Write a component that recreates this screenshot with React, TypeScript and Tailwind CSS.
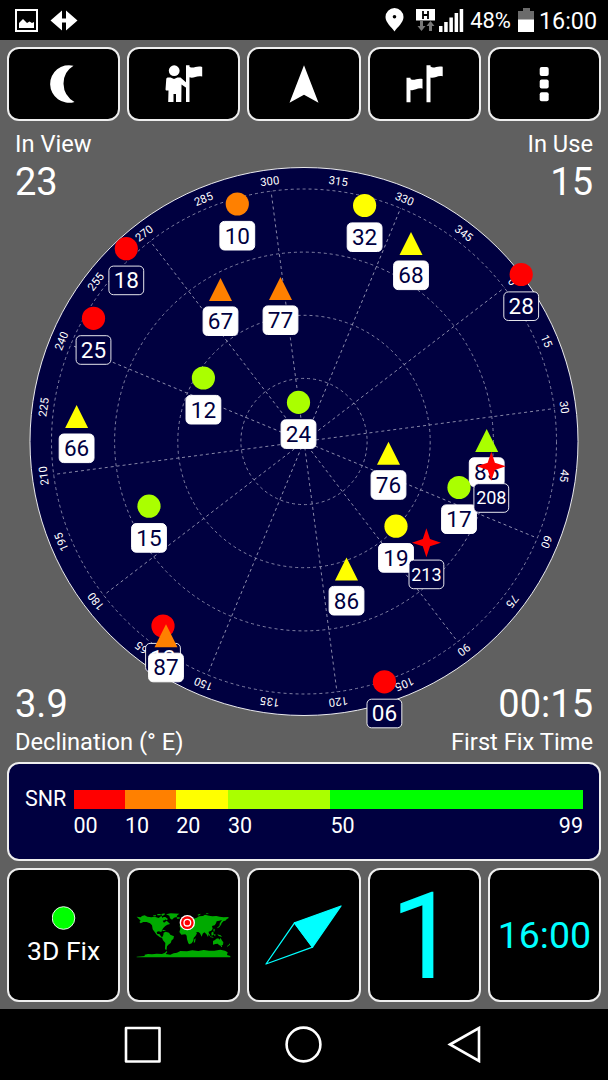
import React from 'react';

type Shape = 'circle' | 'triangle' | 'star';

interface Satellite {
  id: string;
  shape: Shape;
  color: string;
  x: number;
  y: number;
  inUse: boolean;
}

const RED = '#ff0000';
const ORANGE = '#ff8000';
const YELLOW = '#ffff00';
const LIME = '#aaff00';
const NAVY = '#000040';

const CENTER_X = 304;
const CENTER_Y = 313.5;
const HEADING = 52.5;

const satellites: Satellite[] = [
  { id: '10', shape: 'circle', color: ORANGE, x: 237.3, y: 76, inUse: true },
  { id: '18', shape: 'circle', color: RED, x: 126.3, y: 120.7, inUse: false },
  { id: '25', shape: 'circle', color: RED, x: 93.5, y: 190.3, inUse: false },
  { id: '67', shape: 'triangle', color: ORANGE, x: 220.5, y: 161.5, inUse: true },
  { id: '77', shape: 'triangle', color: ORANGE, x: 280.5, y: 160.5, inUse: true },
  { id: '12', shape: 'circle', color: LIME, x: 203.4, y: 250, inUse: true },
  { id: '24', shape: 'circle', color: LIME, x: 298.5, y: 274.4, inUse: true },
  { id: '66', shape: 'triangle', color: YELLOW, x: 76.6, y: 288.6, inUse: true },
  { id: '32', shape: 'circle', color: YELLOW, x: 364.6, y: 77.5, inUse: true },
  { id: '68', shape: 'triangle', color: YELLOW, x: 411, y: 115.6, inUse: true },
  { id: '28', shape: 'circle', color: RED, x: 521.2, y: 146.5, inUse: false },
  { id: '15', shape: 'circle', color: LIME, x: 149, y: 378.2, inUse: true },
  { id: '13', shape: 'circle', color: RED, x: 163, y: 498, inUse: false },
  { id: '87', shape: 'triangle', color: ORANGE, x: 166, y: 507.8, inUse: true },
  { id: '76', shape: 'triangle', color: YELLOW, x: 388.5, y: 325.3, inUse: true },
  { id: '85', shape: 'triangle', color: LIME, x: 486.7, y: 312.4, inUse: true },
  { id: '17', shape: 'circle', color: LIME, x: 459, y: 359.5, inUse: true },
  { id: '208', shape: 'star', color: RED, x: 491.3, y: 338.3, inUse: false },
  { id: '19', shape: 'circle', color: YELLOW, x: 396, y: 398.2, inUse: true },
  { id: '213', shape: 'star', color: RED, x: 426.4, y: 414.7, inUse: false },
  { id: '86', shape: 'triangle', color: YELLOW, x: 346.5, y: 441, inUse: true },
  { id: '06', shape: 'circle', color: RED, x: 384.4, y: 553.8, inUse: false },
];

const rings = [63.1, 126.2, 189.4, 252.5];
const bearings = Array.from({ length: 24 }, (_, i) => i * 15);

const Marker: React.FC<{ sat: Satellite }> = ({ sat }) => (
  <g transform={`translate(${sat.x} ${sat.y})`}>
    {sat.shape === 'circle' && <circle r={11.6} fill={sat.color} />}
    {sat.shape === 'triangle' && <path d="M0 -11.5 11.5 11.5H-11.5Z" fill={sat.color} />}
    {sat.shape === 'star' && (
      <path d="M0 -14.5 3.6 -3.6 14.5 0 3.6 3.6 0 14.5 -3.6 3.6 -14.5 0 -3.6 -3.6Z" fill={sat.color} />
    )}
    <rect
      x={-17.4}
      y={17.4}
      width={34.8}
      height={28.6}
      rx={4.5}
      fill={sat.inUse ? '#fff' : NAVY}
      stroke="#fff"
      strokeWidth={sat.inUse ? 1 : 0.9}
    />
    <text
      y={sat.id.length > 2 ? 38.2 : 39.6}
      textAnchor="middle"
      fill={sat.inUse ? NAVY : '#fff'}
      className={sat.id.length > 2 ? 'text-[18px]' : 'text-[22.5px]'}
    >
      {sat.id}
    </text>
  </g>
);

const SkyPlot: React.FC = () => (
  <svg width="608" height="627" viewBox="0 0 608 627" className="col-start-1 row-start-1">
    <circle cx={CENTER_X} cy={CENTER_Y} r={274} fill={NAVY} stroke="#fff" strokeWidth={0.9} />
    <g fill="none" stroke="#a0a0ba" strokeWidth={0.8} strokeDasharray="3 3">
      {rings.map(r => (
        <circle key={r} cx={CENTER_X} cy={CENTER_Y} r={r} />
      ))}
      {bearings.filter(b => b % 30 === 0).map(b => (
        <path key={b} d={`M${CENTER_X} ${CENTER_Y}V${CENTER_Y - 252.5}`} transform={`rotate(${b + HEADING} ${CENTER_X} ${CENTER_Y})`} />
      ))}
    </g>
    {bearings.map(b => (
      <text
        key={b}
        x={CENTER_X}
        y={CENTER_Y - 258.6}
        textAnchor="middle"
        fill="#fff"
        transform={`rotate(${b + HEADING} ${CENTER_X} ${CENTER_Y})`}
        className="text-[11.3px]"
      >
        {b}
      </text>
    ))}
    {satellites.map(sat => (
      <Marker key={sat.id} sat={sat} />
    ))}
  </svg>
);

const Tile: React.FC<{ className?: string; children: React.ReactNode }> = ({ className = '', children }) => (
  <div className={`flex flex-1 min-w-0 flex-col items-center justify-center rounded-[12px] border-2 border-[#eee] bg-black ${className}`}>
    {children}
  </div>
);

const StatusBar: React.FC = () => (
  <header className="flex h-[40px] items-center justify-between bg-black pl-[15px] pr-[11px]">
    <div className="flex items-center gap-[12px]">
      <svg width="23" height="23" viewBox="0 0 23 23">
        <path d="M1 1h21v21H1z" fill="none" stroke="#fff" strokeWidth="2" />
        <path d="M4 19v-5l4-4 4 4 2.500-1.500L17 14l2-1v6z" fill="#fff" />
      </svg>
      <svg width="28" height="23" viewBox="0 0 28 23" fill="#fff">
        <path d="M12 1.500v8h4v-8L27.500 11.500 16 21.500v-8h-4v8L.5 11.500z" />
      </svg>
    </div>
    <div className="flex items-center text-white">
      <svg width="19" height="24" viewBox="0 0 19 24">
        <path d="M9.500 0a9 9 0 0 1 9 9c0 5.500-6 10-9 14.500C6.500 19 .5 14.500.5 9a9 9 0 0 1 9-9z" fill="#fff" />
        <circle cx="9.500" cy="8.700" r="1.800" fill="#000" />
      </svg>
      <svg width="19" height="24" viewBox="0 0 19 24" className="ml-[12px]">
        <path d="M0 1h19v11.500H0z" fill="#fff" />
        <path d="M7 3v8M12 3v8M7 7h5" stroke="#000" strokeWidth="1.800" />
        <path d="M4 13h3v5h2.500l-4 5-4-5H4zM13 23h3v-5h2.500l-4-5-4 5H13z" fill="#777" />
      </svg>
      <svg width="25" height="24" viewBox="0 0 25 24" fill="#fff" className="ml-[4px]">
        <path d="M0 18h3.500v6H0zM5.200 14h3.500v10H5.200zM10.400 9.500h3.500V24h-3.500zM15.600 5h3.500v19h-3.500zM20.700 1h3.500v23h-3.500z" />
      </svg>
      <span className="ml-[6px] mt-[2px] text-[22px] leading-[26px]">48%</span>
      <svg width="16" height="24" viewBox="0 0 16 24" className="ml-[7px]">
        <path d="M5 0h7v3h4v9H0V3h5z" fill="#6b6b6b" />
        <path d="M0 11.500h16V24H0z" fill="#fff" />
      </svg>
      <span className="ml-[5px] mt-[2px] text-[23.3px] leading-[26px]">16:00</span>
    </div>
  </header>
);

const Toolbar: React.FC = () => (
  <nav className="flex h-[74px] gap-[7px]">
    <Tile>
      <svg width="40" height="40" viewBox="0 0 40 40" fill="#fff">
        <path d="M29.500 1.700A18.800 18.800 0 1 0 30.500 37.900A20.900 20.900 0 0 1 29.500 1.700z" />
      </svg>
    </Tile>
    <Tile>
      <svg width="40" height="40" viewBox="0 0 40 40" fill="#fff">
        <circle cx="10.200" cy="6.700" r="5.400" />
        <path d="M3.500 13.500h3l3.500 1.500 3.500-1.500h3l6 5.300v5.200l-5-3.500-.2 17.500h-5.300V30h-2.500v8H4.200l.3-11.500H2l-.5-1 .8-11z" />
        <path d="M22 1.200h3.500v1.500c4 2.500 6.500-1.500 12.700.2v9.600c-6-1.500-8.500 2.500-12.700.8v24.800H22z" />
      </svg>
    </Tile>
    <Tile>
      <svg width="40" height="40" viewBox="0 0 40 40" fill="#fff">
        <path d="M20 1.200l14.500 37.500L20 30.700 5.500 38.700z" />
      </svg>
    </Tile>
    <Tile>
      <svg width="40" height="40" viewBox="0 0 40 40" fill="#fff">
        <path d="M2.500 13.700h4v1.200c3.500 2.500 6-1.200 12 0v9.800c-5-1.500-8 2.500-12 1.200v12.300h-4z" />
        <path d="M22.500 1.200h4v1.300c3.500 2.700 6-1.200 12.200.2v9.600c-5-1.500-8 2.500-12.200 1.200v24.700h-4z" />
      </svg>
    </Tile>
    <Tile>
      <svg width="40" height="40" viewBox="0 0 40 40" fill="#fff">
        <rect x="15.700" y="3" width="9" height="9" rx="2" />
        <rect x="15.700" y="15.500" width="9" height="9" rx="2" />
        <rect x="15.700" y="28.200" width="9" height="9" rx="2" />
      </svg>
    </Tile>
  </nav>
);

const Readout: React.FC<{ label: string; value: string; flip?: boolean; right?: boolean }> = ({ label, value, flip, right }) => (
  <div className={`flex ${flip ? 'flex-col-reverse' : 'flex-col'} ${right ? 'items-end' : 'items-start'}`}>
    <span className="text-[23.7px] leading-[32px]">{label}</span>
    <span className="text-[38px] leading-[44px]">{value}</span>
  </div>
);

const snrBands = [
  { label: '00', width: 51.5, color: RED },
  { label: '10', width: 51.2, color: ORANGE },
  { label: '20', width: 51.8, color: YELLOW },
  { label: '30', width: 102.5, color: LIME },
  { label: '50', width: 252.5, color: '#00ff00' },
];

const SnrLegend: React.FC = () => (
  <section className="flex h-[99px] rounded-[12px] border-2 border-[#eee] bg-[#000040] pl-[16px] pt-[26px] text-[21.5px] text-white">
    <span className="w-[48.500px] leading-[17px]">SNR</span>
    <div className="flex">
      {snrBands.map(band => (
        <div key={band.label} style={{ width: band.width }}>
          <div className="h-[19px]" style={{ backgroundColor: band.color }} />
          <div className="mt-[4px] flex justify-between leading-[26px]">
            <span>{band.label}</span>
            {band.label === '50' && <span>99</span>}
          </div>
        </div>
      ))}
    </div>
  </section>
);

const WorldMap: React.FC = () => (
  <svg width="110" height="70" viewBox="0 0 330 210" className="ml-[2px]">
    <g fill="#00aa00">
      {/* north america */}
      <path d="M20 50l12 2 4-4 8-2 8 4 12 2 10-2 12 4 8-6 4 6 6-2 2 8-8 2 4 6 8-6 4 4 6 6-8 2-6 4-6 6-4 6-2 6-8-2-6 2 2 6 6 0 6 8 6 2-2 2-8-2-10-8-6-8-6-8-2-12-6-6-10-4-10 0-8 4-4-4 4-4z" />
      <path d="M70 46h8v3h-8zM82 42h10v4H82zM94 42l10-2v4l-8 4zM98 51h8l8 6-4 4-6-4z" />
      {/* greenland */}
      <path d="M108 43l14-3 26 1-6 5-2 5-8 2-6 6-6-4-2-8z" />
      <path d="M140 52h9v4h-8zM94 89l8 1 6 3-8 0z" />
      {/* south america */}
      <path d="M101 98l6-3 10 3 4 6 11 5-2 8-5 4-3 8-7 5-4 5-1 8-1 4-4-4 1-18-7-8-3-8 4-8z" />
      {/* africa */}
      <path d="M151 87l8-4 12 0 4 4 14 0 4 10 7 3-3 7-6 7-1 8-5 8-7 3-3-3-4-12-1-11-4-4-12 1-6-8z" />
      <path d="M193 118l4-3-2 12-4 1z" />
      {/* eurasia */}
      <path d="M149 80l1-7 7-1 0-6 8-3 4-7 8-6 8 2 4 4 10-2 8-5 12-1 6-4 12 3 10 2 12-1 10 2 12 2 14-1 1 3-6 4-4 4-5 1-8 8-2-4 5-7-8 2-8 2-2 6-4 6-8 2 2 8-4 6-8 3 0 8-2 8-5-9-6-5-5 4-3 9-5-10-5-4-6 1 1 5-7 6-5-1-6-11-1-6-8 1-4-3-8 0-8 2z" />
      <path d="M159 56l5 2-1 8-6 0zM203 44l8-3v3l-7 3zM228 39l9 2-7 2zM270 67l5 4-6 9-6 5-1-3 6-4z" />
      {/* indonesia and australia */}
      <path d="M235 98l6 8-2 2-6-8zM244 98l6-4 1 10-6 3zM251 86l3 1 0 8-4-3zM240 109l10 2v2l-10-2zM253 102l3 0 0 7-3-1zM262 103l10 3 4 5-10-3z" />
      <path d="M249 123l6-3 4-4 6-1 3 4 4-5 3 6 5 7-1 7-6 4-6-3-4-4-7 1-7 2zM273 138h3v3h-3zM298 130l2 4-8 6-1-2 5-3z" />
      {/* antarctica */}
      <path d="M20 170l24-2 0-4 10-2 12 1 14-2 16 1 8-3 6-6 2 3-5 6 14 2 10-4 10-2 10-5 20 1 16-3 18 2 16-3 16 2 16 0 18-3 14 3 8 5-2 8 10 3v4H20z" />
    </g>
    <circle cx="172" cy="68" r="23" fill="#fff" />
    <circle cx="172" cy="68" r="19" fill="#ff0000" />
    <circle cx="172" cy="68" r="10" fill="none" stroke="#fff" strokeWidth="4" />
  </svg>
);

const BottomTiles: React.FC = () => (
  <section className="flex h-[134px] gap-[7px] text-white">
    <Tile>
      <svg width="24" height="24" viewBox="0 0 24 24" className="mt-[3px]">
        <circle cx="11.500" cy="12" r="11.300" fill="#00ff00" stroke="#fff" strokeWidth="0.900" />
      </svg>
      <span className="mt-[5px] text-[26.5px] leading-[32px]">3D Fix</span>
    </Tile>
    <Tile>
      <WorldMap />
    </Tile>
    <Tile>
      <svg width="80" height="64" viewBox="0 0 80 64" stroke="#00ffff" strokeWidth="1.300" strokeLinejoin="round">
        <path d="M30.500 19.800L77 3 48.500 44.200z" fill="#00ffff" />
        <path d="M30.500 19.800L2 61 48.500 44.200z" fill="none" />
      </svg>
    </Tile>
    <Tile>
      <span className="pt-[5px] text-[121px] leading-[125px] text-[#00ffff]">1</span>
    </Tile>
    <Tile>
      <span className="text-[37.5px] leading-[44px] text-[#00ffff]">16:00</span>
    </Tile>
  </section>
);

const NavigationBar: React.FC = () => (
  <footer className="flex h-[71px] items-center justify-center gap-[124px] bg-black pr-[1px]">
    <svg width="37" height="37" viewBox="0 0 37 37" fill="none" stroke="#fff" strokeWidth="2.600" strokeLinejoin="round">
      <path d="M2 2h33.500v33.500H2z" />
    </svg>
    <svg width="37" height="37" viewBox="0 0 37 37" fill="none" stroke="#fff" strokeWidth="2.600">
      <circle cx="18.500" cy="18.500" r="16.900" />
    </svg>
    <svg width="37" height="37" viewBox="0 0 37 37" fill="none" stroke="#fff" strokeWidth="2.600">
      <path d="M4 18.500L33 2v33z" />
    </svg>
  </footer>
);

const App: React.FC = () => {
  return (
    <div className="flex h-[1080px] w-[608px] flex-col overflow-hidden bg-[#606060] font-[Roboto,sans-serif]">
      <StatusBar />
      <main className="flex flex-1 flex-col px-[7px] pt-[7px]">
        <Toolbar />
        <div className="-mx-[7px] grid h-[641px] pt-[7px] text-white">
          <SkyPlot />
          <div className="col-start-1 row-start-1 flex h-[630px] flex-col justify-between px-[15px]">
            <div className="flex justify-between">
              <Readout label="In View" value="23" />
              <Readout label="In Use" value="15" right />
            </div>
            <div className="flex justify-between">
              <Readout label="Declination (° E)" value="3.9" flip />
              <Readout label="First Fix Time" value="00:15" flip right />
            </div>
          </div>
        </div>
        <SnrLegend />
        <div className="mt-[7px]">
          <BottomTiles />
        </div>
      </main>
      <NavigationBar />
    </div>
  );
};

export default App;
